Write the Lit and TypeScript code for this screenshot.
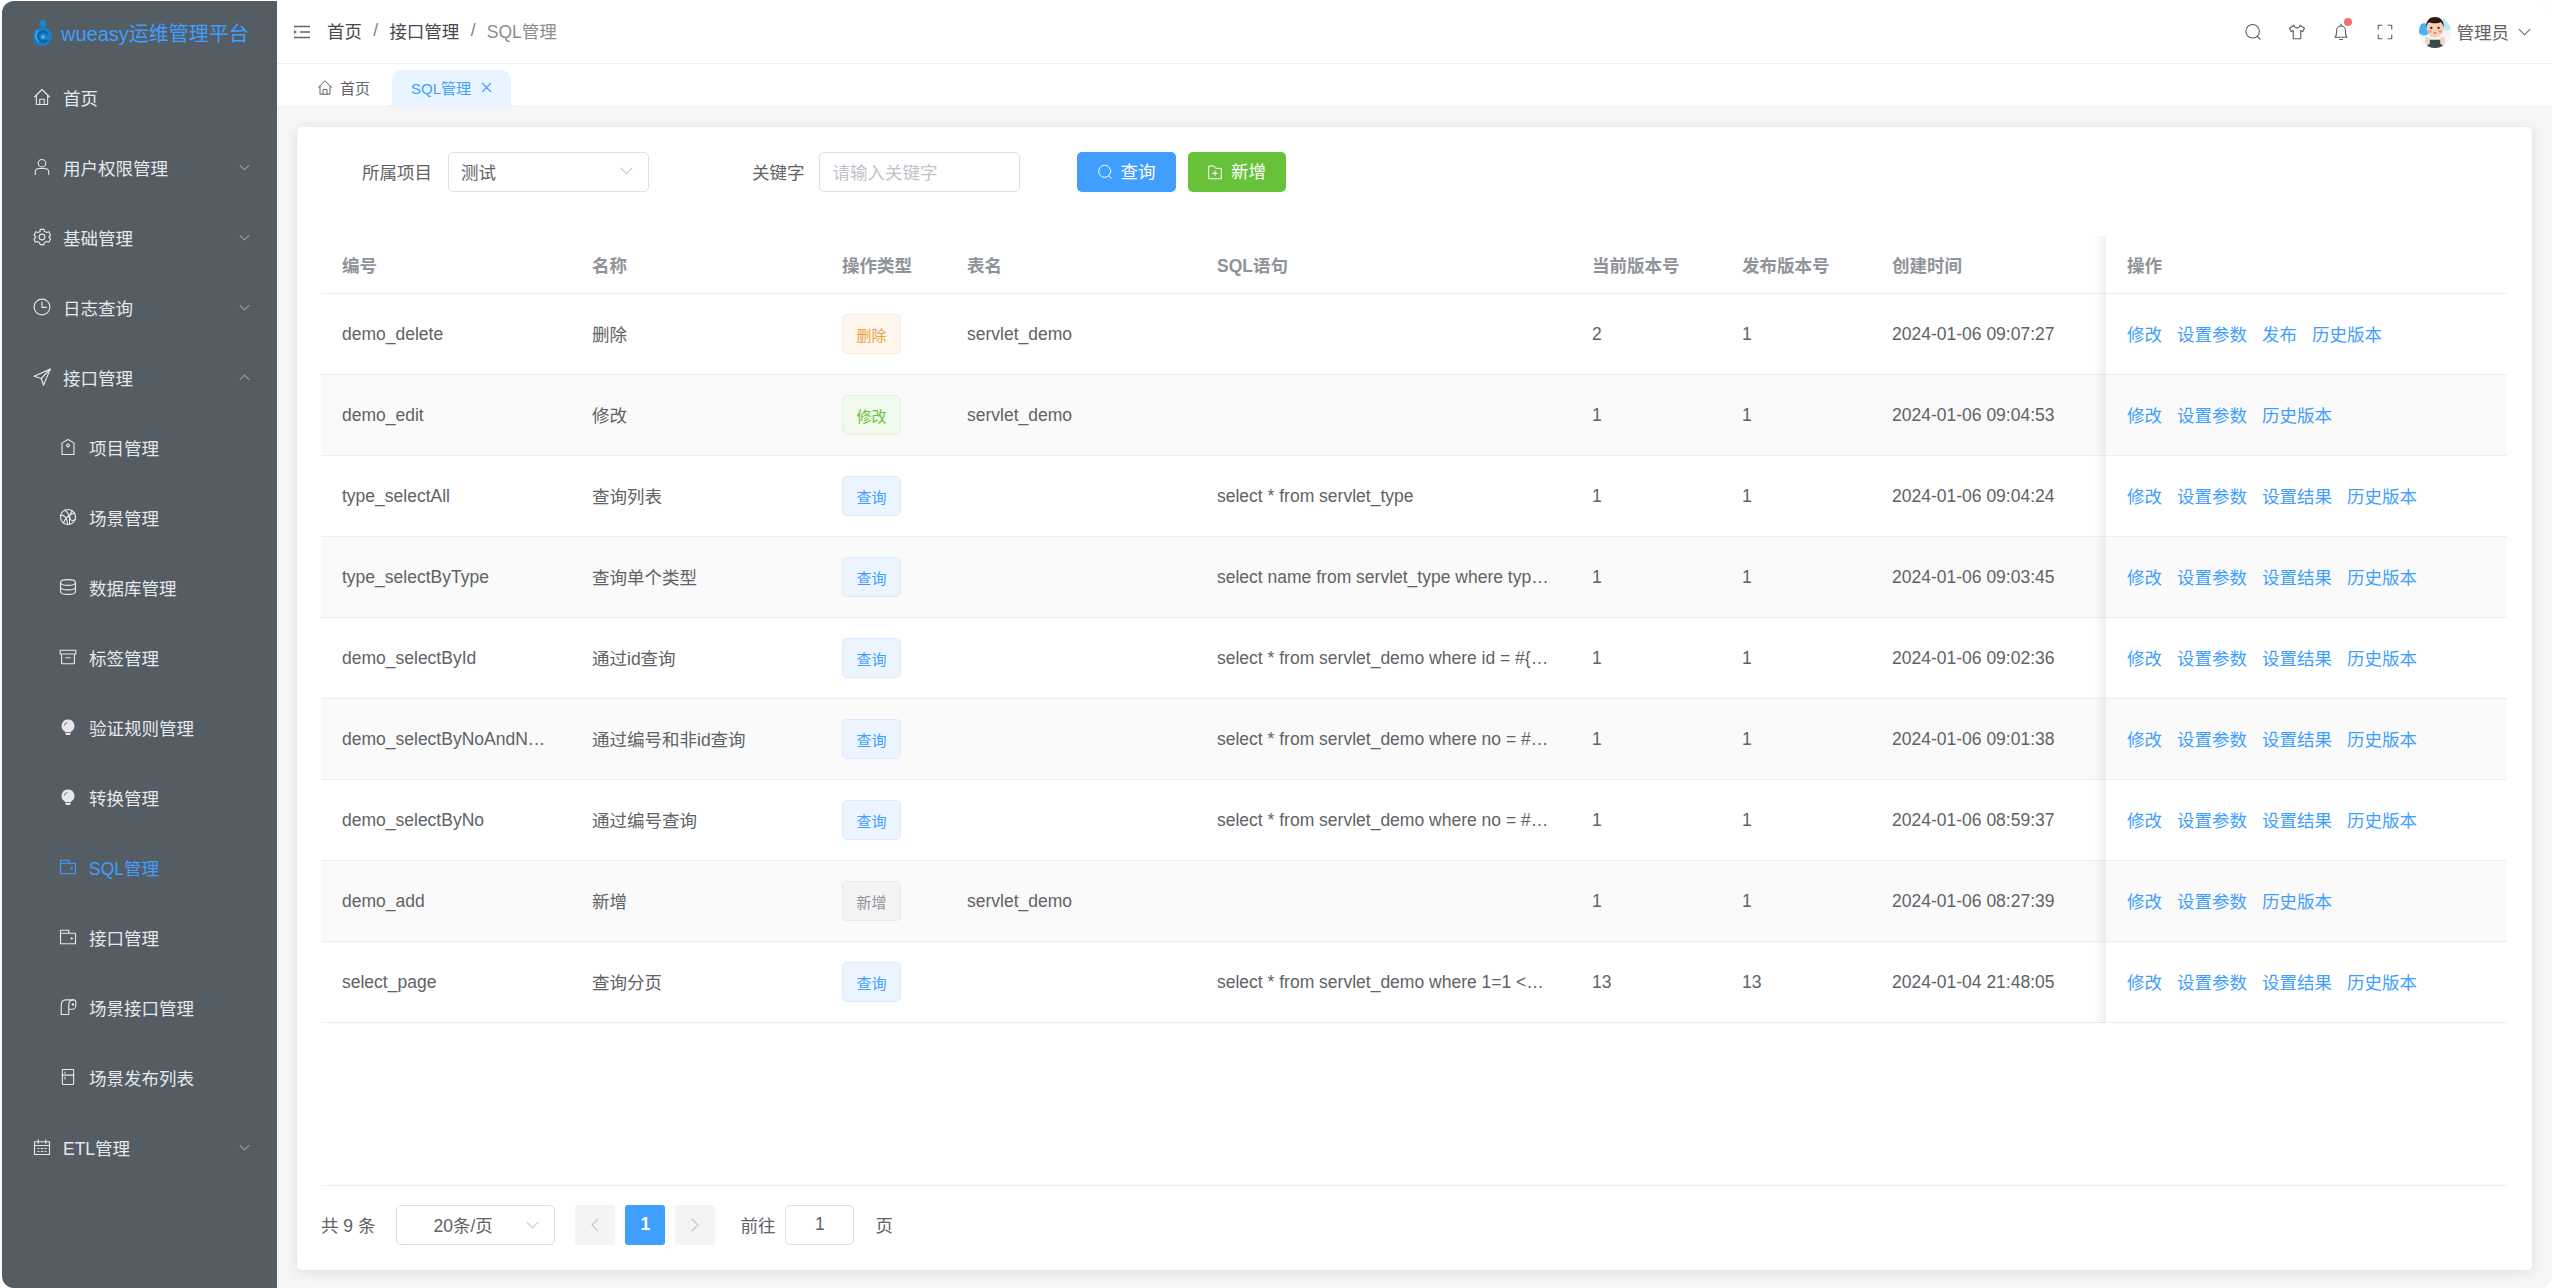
import { LitElement, html, css, svg } from "lit";
import { customElement } from "lit/decorators.js";

const ic = (body: any, vb = "0 0 24 24") =>
  html`<svg class="ico" viewBox="${vb}" fill="none" stroke="currentColor" stroke-width="1.5" stroke-linecap="round" stroke-linejoin="round">${body}</svg>`;

const chevDown = html`<svg class="chev" viewBox="0 0 14 8" fill="none" stroke="currentColor" stroke-width="1.1"><path d="M1 1l6 6 6-6"/></svg>`;
const chevUp = html`<svg class="chev" viewBox="0 0 14 8" fill="none" stroke="currentColor" stroke-width="1.1"><path d="M1 7l6-6 6 6"/></svg>`;

const I: Record<string, any> = {
  home: svg`<path d="M2 12 12 2l10 10"/><path d="M4.500 10v12h15V10"/><path d="M9 22v-7h6v7"/>`,
  user: svg`<circle cx="12" cy="7" r="5"/><path d="M3 22v-3c0-3 2.500-5 5.500-5h7c3 0 5.500 2 5.500 5v3"/>`,
  gear: svg`<path d="M9.500 1.800h5l1 3 2.800 1.300 2.900-1 2.300 4.400-2.300 2.500 2.300 2.500-2.300 4.400-2.900-1-2.800 1.300-1 3h-5l-1-3-2.800-1.300-2.900 1L1.500 14.500 3.800 12 1.500 9.500l2.300-4.400 2.900 1 2.800-1.300z"/><circle cx="12" cy="12" r="3.800"/>`,
  time: svg`<circle cx="12" cy="12" r="10.500"/><path d="M12 5.500v7h6"/>`,
  pos: svg`<path d="M23 1.500 1.500 11l9.500 3 3 9z"/><path d="M23 1.500 11 14"/>`,
  date: svg`<rect x="2" y="5" width="20" height="17"/><path d="M2 10h20M7 2.500V7M17 2.500V7"/><path d="M6.500 14h1.500M11 14h2M16 14h1.500M6.500 18h1.500M11 18h2M16 18h1.500"/>`,
  tag: svg`<path d="M12 2 20 6.500V22H4V6.500z"/><circle cx="12" cy="10" r="1.800"/>`,
  ball: svg`<circle cx="12" cy="12" r="10"/><path d="M2.500 9.500c5 0 8 2.500 9 12M8 3c5 3 7 8 6 18.500M20.500 6.500C14 8.500 8 14 6 20M17.500 3.800c-3.500 5-4 9-2 11.700 1.500 1.500 4 2 6.500-.5"/>`,
  coin: svg`<ellipse cx="12" cy="6" rx="10" ry="3.800"/><path d="M2 6v12c0 2.100 4.500 3.800 10 3.800s10-1.700 10-3.800V6M2 12c0 2.100 4.500 3.800 10 3.800s10-1.700 10-3.800"/>`,
  box: svg`<path d="M1.500 3h21v5h-21zM3.500 8v13h17V8M9 13h6"/>`,
  wallet: svg`<path d="M2 21V3h11v4h9v14z"/><path d="M2 7h11"/><circle cx="17" cy="14" r=".8" fill="currentColor"/>`,
  paper: svg`<path d="M3 22V10c0-4 2-7.500 6-7.500h10"/><path d="M3 22h10V10c0-4 2-7.500 6-7.500s3.500 3 3.500 6-1.500 6.500-4.500 6.500h-5"/><circle cx="18.500" cy="8.500" r=".9" fill="currentColor"/>`,
  fridge: svg`<rect x="4.500" y="2" width="15" height="20" rx="1"/><path d="M4.500 9.500h15M8 5.500v1.500M8 12.500v2"/>`,
};

const bulb = html`<svg class="ico" viewBox="0 0 24 24" fill="currentColor"><path d="M12 2a8.500 8.500 0 0 0-5 15.400c.8.600 1 1 1 1.600h8c0-.600.2-1 1-1.600A8.500 8.500 0 0 0 12 2z"/><path d="M8.500 20h7v1l-1 1.500h-5l-1-1.500z"/><path d="M7 10a5 5 0 0 1 4-4" fill="none" stroke="#545c64" stroke-width="1.200"/></svg>`;

const TOP_BEFORE = [
  { t: "首页", i: "home", noArrow: true },
  { t: "用户权限管理", i: "user" },
  { t: "基础管理", i: "gear" },
  { t: "日志查询", i: "time" },
];
const SUBS = [
  { t: "项目管理", i: "tag" },
  { t: "场景管理", i: "ball" },
  { t: "数据库管理", i: "coin" },
  { t: "标签管理", i: "box" },
  { t: "验证规则管理", i: "bulb" },
  { t: "转换管理", i: "bulb" },
  { t: "SQL管理", i: "wallet", active: true },
  { t: "接口管理", i: "wallet" },
  { t: "场景接口管理", i: "paper" },
  { t: "场景发布列表", i: "fridge" },
];

type Row = [string, string, string, string, string, string, string, string, string[]];
const A = ["修改", "设置参数", "设置结果", "历史版本"];
const B = ["修改", "设置参数", "历史版本"];
const ROWS: Row[] = [
  ["demo_delete", "删除", "删除", "servlet_demo", "", "2", "1", "2024-01-06 09:07:27", ["修改", "设置参数", "发布", "历史版本"]],
  ["demo_edit", "修改", "修改", "servlet_demo", "", "1", "1", "2024-01-06 09:04:53", B],
  ["type_selectAll", "查询列表", "查询", "", "select * from servlet_type", "1", "1", "2024-01-06 09:04:24", A],
  ["type_selectByType", "查询单个类型", "查询", "", "select name from servlet_type where typ…", "1", "1", "2024-01-06 09:03:45", A],
  ["demo_selectById", "通过id查询", "查询", "", "select * from servlet_demo where id = #{…", "1", "1", "2024-01-06 09:02:36", A],
  ["demo_selectByNoAndN…", "通过编号和非id查询", "查询", "", "select * from servlet_demo where no = #…", "1", "1", "2024-01-06 09:01:38", A],
  ["demo_selectByNo", "通过编号查询", "查询", "", "select * from servlet_demo where no = #…", "1", "1", "2024-01-06 08:59:37", A],
  ["demo_add", "新增", "新增", "servlet_demo", "", "1", "1", "2024-01-06 08:27:39", B],
  ["select_page", "查询分页", "查询", "", "select * from servlet_demo where 1=1 <…", "13", "13", "2024-01-04 21:48:05", A],
];
const HEADS = ["编号", "名称", "操作类型", "表名", "SQL语句", "当前版本号", "发布版本号", "创建时间", "操作"];
const TAG: Record<string, string> = { 删除: "t-del", 修改: "t-mod", 查询: "t-qry", 新增: "t-add" };

@customElement("app-root")
export class AppRoot extends LitElement {
  static styles = css`
    :host { display: block; height: 1288px; background: #fff; overflow: hidden;
      font-family: "Liberation Sans", "Noto Sans CJK SC", sans-serif; font-size: 17.5px; color: #606266; }
    * { box-sizing: border-box; }
    .app { display: flex; height: 1287px; margin: 1px 5px 0 2px; border-radius: 12px; overflow: hidden; background: #f6f6f8; }
    .ico { width: 18px; height: 18px; flex: none; display: block; }
    .chev { width: 11px; height: 7px; flex: none; display: block; }

    .side { width: 275px; flex: none; background: #545c64; color: #e6e8ea; display: flex; flex-direction: column; }
    .logo { height: 61px; display: flex; align-items: center; padding: 2px 0 0 30px; gap: 8px; color: #409eff; font-size: 20px; }
    .logo svg { width: 21px; height: 26px; flex: none; }
    .item { height: 70px; flex: none; display: flex; align-items: center; padding: 0 27px 0 31px; gap: 12px; }
    .item .label { flex: 1; }
    .item .chev { color: #c9cdd1; }
    .item.sub { padding-left: 57px; }
    .item.active { color: #409eff; }

    .right { flex: 1; min-width: 0; display: flex; flex-direction: column; }
    .top { height: 63px; flex: none; background: #fff; border-bottom: 1px solid #eeeff2; display: flex; align-items: center; padding: 0 21px 0 17px; }
    .burger { width: 16px; height: 14px; margin-right: 17px; color: #606266; }
    .crumb { display: flex; align-items: center; color: #46484d; padding-bottom: 3px; }
    .crumb i { font-style: normal; margin: 0 11.25px; color: #7c7f85; }
    .crumb .last { color: #8b8d91; }
    .tools { margin-left: auto; display: flex; align-items: center; }
    .tool { width: 43.75px; display: flex; justify-content: center; position: relative; color: #5a5e66; }
    .dot { position: absolute; top: -5px; left: 25px; width: 8px; height: 8px; border-radius: 50%; background: #f56c6c; }
    .avatar { width: 32px; height: 32px; margin: 0 6px 0 12px; flex: none; }
    .uname { color: #606266; margin-right: 9px; padding-bottom: 2px; }
    .tools .chev { width: 13px; height: 8px; color: #606266; }

    .tabs { height: 43px; flex: none; background: #fff; border-bottom: 1px solid #eeeff2; display: flex; align-items: flex-end; padding-left: 20px; font-size: 15px; }
    .tab { height: 36px; display: flex; align-items: center; padding-bottom: 2px; }
    .tab.home { padding: 0 22px 2px 20px; gap: 7px; color: #606266; }
    .tab.home .ico { width: 16px; height: 17px; }
    .tab.on { position: relative; padding: 0 19px 2px; gap: 10px; background: #e8f4ff; color: #409eff; border-radius: 10px 10px 0 0; }
    .tab.on::before, .tab.on::after { content: ""; position: absolute; bottom: 0; width: 5px; height: 5px; }
    .tab.on::before { left: -5px; background: radial-gradient(circle at 0 0, transparent 5px, #e8f4ff 5.5px); }
    .tab.on::after { right: -5px; background: radial-gradient(circle at 100% 0, transparent 5px, #e8f4ff 5.5px); }
    .tab.on svg { width: 11px; height: 11px; }

    .main { flex: 1; min-height: 0; padding: 20px 20px 18px; display: flex; }
    .card { flex: 1; min-width: 0; background: #fff; border-radius: 5px; box-shadow: 0 2px 14px rgba(0,0,0,.1); padding: 25px 25px 25px 24px; display: flex; flex-direction: column; }

    .filter { display: flex; align-items: center; height: 40px; flex: none; }
    .flabel { color: #606266; padding-bottom: 2px; }
    .flabel.a { margin: 0 16px 0 41px; }
    .flabel.b { margin: 0 14px 0 103px; }
    .box { height: 40px; border: 1.25px solid #dcdfe6; border-radius: 5px; background: #fff; display: flex; align-items: center; }
    .box .chev { color: #c0c4cc; width: 13px; height: 8px; }
    .sel { width: 201px; padding: 0 15px 2px 12px; justify-content: space-between; }
    .inp { width: 201px; padding: 0 0 2px 13px; color: #c0c4cc; }
    .btn { height: 40px; display: flex; align-items: center; justify-content: center; gap: 8px; border-radius: 5px; color: #fff; }
    .btn span { padding-bottom: 3px; }
    .btn .ico { width: 16px; height: 16px; }
    .btn.q { width: 99px; margin-left: 57px; background: #409eff; }
    .btn.n { width: 98px; margin-left: 12px; background: #67c23a; }

    .table { margin-top: 44px; flex: none; display: grid; grid-template-columns: 250px 250px 125px 250px 375px 150px 150px 235px 1fr; grid-template-rows: 58px repeat(9, 81px); }
    .c { display: flex; align-items: center; padding: 0 21px; border-bottom: 1px solid #ebeef5; min-width: 0; background: #fff; }
    .c.h { font-weight: 700; color: #909399; }
    .c.even { background: #fafafa; }
    .txt { white-space: nowrap; }
    .cn { padding-bottom: 1px; }
    .c.op { gap: 15px; position: relative; padding-bottom: 1px; }
    .c.op::before { content: ""; position: absolute; top: 0; bottom: -1px; left: -12px; width: 12px; background: linear-gradient(to left, rgba(0,0,0,.06), rgba(0,0,0,0)); pointer-events: none; }
    .c.op a { color: #409eff; }
    .tag { height: 40px; width: 59px; flex: none; display: flex; align-items: center; justify-content: center; font-size: 15px; border-radius: 5px; border: 1.25px solid; }
    .t-del { color: #e6a23c; background: #fdf6ec; border-color: #faecd8; }
    .t-mod { color: #67c23a; background: #f0f9eb; border-color: #e1f3d8; }
    .t-qry { color: #409eff; background: #ecf5ff; border-color: #d9ecff; }
    .t-add { color: #909399; background: #f4f4f5; border-color: #e9e9eb; }

    .pager { margin-top: auto; height: 60px; flex: none; border-top: 1.25px solid #ebeef5; padding-top: 19px; display: flex; align-items: flex-start; }
    .pager > * { height: 40px; display: flex; align-items: center; padding-bottom: 1px; }
    .psel { width: 159px; margin-left: 21px; padding: 0 15px 1px 36px; justify-content: space-between; }
    .pbtn { width: 40px; justify-content: center; background: #f4f4f5; border-radius: 3px; color: #c0c4cc; margin-left: 10px; }
    .pbtn svg { width: 8px; height: 14px; }
    .pbtn.first { margin-left: 20px; }
    .pbtn.cur { background: #409eff; color: #fff; font-weight: 700; }
    .goto { margin-left: 25px; }
    .pinp { width: 69px; margin-left: 10px; justify-content: center; }
    .pend { margin-left: 21px; }
  `;

  private menuIcon(i: string) {
    return i === "bulb" ? bulb : ic(I[i]);
  }

  render() {
    return html`<div class="app">
      <aside class="side">
        <div class="logo">
          <svg viewBox="0 0 21 26" fill="none">
            <circle cx="11" cy="3.500" r="3.500" fill="#1a86d0"/>
            <circle cx="10.500" cy="16.500" r="9.500" fill="#1a7fc6"/>
            <path d="M3 24c2 1.500 5 2 8 1.500L6 21z" fill="#1a7fc6"/>
            <path d="M15.500 14a5 5 0 1 0-.5 6" stroke="#0f5f9e" stroke-width="2"/>
            <path d="M5.500 10c-2 3.500-2 8 1 11.500" stroke="#5ab0e8" stroke-width="1.200"/>
            <circle cx="11" cy="17" r="1.800" fill="#5ab0e8"/>
          </svg>
          <span>wueasy运维管理平台</span>
        </div>
        ${TOP_BEFORE.map(
          (m) => html`<div class="item">
            ${this.menuIcon(m.i)}<span class="label">${m.t}</span>${m.noArrow ? "" : chevDown}
          </div>`
        )}
        <div class="item">${this.menuIcon("pos")}<span class="label">接口管理</span>${chevUp}</div>
        ${SUBS.map(
          (m) => html`<div class="item sub ${m.active ? "active" : ""}">${this.menuIcon(m.i)}<span class="label">${m.t}</span></div>`
        )}
        <div class="item">${this.menuIcon("date")}<span class="label">ETL管理</span>${chevDown}</div>
      </aside>

      <div class="right">
        <header class="top">
          <svg class="burger" viewBox="0 0 16 14" fill="none" stroke="currentColor" stroke-width="1.600"><path d="M0 1.500h16M6 7h10M0 12.500h16"/><path d="M0 5l3 2-3 2z" fill="currentColor" stroke="none"/></svg>
          <div class="crumb"><span>首页</span><i>/</i><span>接口管理</span><i>/</i><span class="last">SQL管理</span></div>
          <div class="tools">
            <span class="tool">${ic(svg`<circle cx="11.500" cy="11" r="9"/><path d="M18 18l3.500 3.500"/>`)}</span>
            <span class="tool">${ic(svg`<path d="M8 3 2 7l2.500 4.500L7 10v11h10V10l2.500 1.500L22 7l-6-4c-.5 2.500-2 3.500-4 3.500S8.500 5.500 8 3z"/>`)}</span>
            <span class="tool">${ic(svg`<path d="M4 19c1.500-1.500 2-3 2-6V10a6 6 0 0 1 12 0v3c0 3 .5 4.500 2 6z"/><path d="M12 1.500V4"/><path d="M10 22h4"/>`)}<span class="dot"></span></span>
            <span class="tool">${ic(svg`<path d="M3 8V3h5M16 3h5v5M21 16v5h-5M8 21H3v-5"/>`)}</span>
            <svg class="avatar" viewBox="0 0 31 31">
              <defs><clipPath id="av"><circle cx="15.500" cy="15.500" r="15.500"/></clipPath></defs>
              <g clip-path="url(#av)">
                <rect width="31" height="31" fill="#f2f6f7"/>
                <circle cx="5" cy="13" r="6" fill="#45b4ee"/>
                <circle cx="27" cy="8" r="6" fill="#bfe6f7"/>
                <rect x="8" y="23" width="15" height="9" fill="#3b4b4a"/>
                <ellipse cx="15.500" cy="12" rx="8" ry="9" fill="#f6cfb4"/>
                <path d="M7 11c-.5-7 4-10 8.500-10S24.500 4 24 11c-1-3-2-4.500-3-5-3 1.500-8 1.500-11 0-1.500 1-2.500 2-3 5z" fill="#2a1a16"/>
                <circle cx="12" cy="11.500" r="1.100" fill="#2a1a16"/>
                <circle cx="19" cy="11.500" r="1.100" fill="#2a1a16"/>
                <ellipse cx="10.500" cy="15" rx="2" ry="1.300" fill="#f29a9a"/>
                <ellipse cx="20.500" cy="15" rx="2" ry="1.300" fill="#f29a9a"/>
                <path d="M14 16.500h3" stroke="#b5604f" stroke-width="1"/>
                <rect x="6" y="20" width="4.500" height="8" rx="2" fill="#f3d6bd"/>
                <rect x="20.500" y="20" width="4.500" height="8" rx="2" fill="#f3d6bd"/>
              </g>
            </svg>
            <span class="uname">管理员</span>${chevDown}
          </div>
        </header>

        <nav class="tabs">
          <div class="tab home">${ic(I.home)}<span>首页</span></div>
          <div class="tab on"><span>SQL管理</span><svg viewBox="0 0 11 11" fill="none" stroke="currentColor" stroke-width="1.100"><path d="M1 1l9 9M10 1l-9 9"/></svg></div>
        </nav>

        <main class="main">
          <section class="card">
            <div class="filter">
              <span class="flabel a">所属项目</span>
              <div class="box sel"><span>测试</span>${chevDown}</div>
              <span class="flabel b">关键字</span>
              <div class="box inp">请输入关键字</div>
              <div class="btn q">${ic(svg`<circle cx="11.500" cy="11" r="9"/><path d="M18 18l3.500 3.500"/>`)}<span>查询</span></div>
              <div class="btn n">${ic(svg`<path d="M2.500 21.500V3h8l2.500 3.500h8.500v15z"/><path d="M12 10.500v7M8.500 14h7"/>`)}<span>新增</span></div>
            </div>

            <div class="table">
              ${HEADS.map((h, i) => html`<div class="c h ${i === 8 ? "op" : ""}">${h}</div>`)}
              ${ROWS.map((r, i) => {
                const ev = i % 2 === 1 ? "even" : "";
                return html`
                  <div class="c ${ev}"><span class="txt">${r[0]}</span></div>
                  <div class="c cn ${ev}"><span class="txt">${r[1]}</span></div>
                  <div class="c ${ev}"><span class="tag ${TAG[r[2]]}">${r[2]}</span></div>
                  <div class="c ${ev}"><span class="txt">${r[3]}</span></div>
                  <div class="c ${ev}"><span class="txt">${r[4]}</span></div>
                  <div class="c ${ev}"><span class="txt">${r[5]}</span></div>
                  <div class="c ${ev}"><span class="txt">${r[6]}</span></div>
                  <div class="c ${ev}"><span class="txt">${r[7]}</span></div>
                  <div class="c op ${ev}">${r[8].map((o) => html`<a>${o}</a>`)}</div>`;
              })}
            </div>

            <div class="pager">
              <span>共 9 条</span>
              <div class="box psel"><span>20条/页</span>${chevDown}</div>
              <span class="pbtn first"><svg viewBox="0 0 8 14" fill="none" stroke="currentColor" stroke-width="1.100"><path d="M7 1 1 7l6 6"/></svg></span>
              <span class="pbtn cur">1</span>
              <span class="pbtn"><svg viewBox="0 0 8 14" fill="none" stroke="currentColor" stroke-width="1.100"><path d="M1 1l6 6-6 6"/></svg></span>
              <span class="goto">前往</span>
              <div class="box pinp">1</div>
              <span class="pend">页</span>
            </div>
          </section>
        </main>
      </div>
    </div>`;
  }
}
